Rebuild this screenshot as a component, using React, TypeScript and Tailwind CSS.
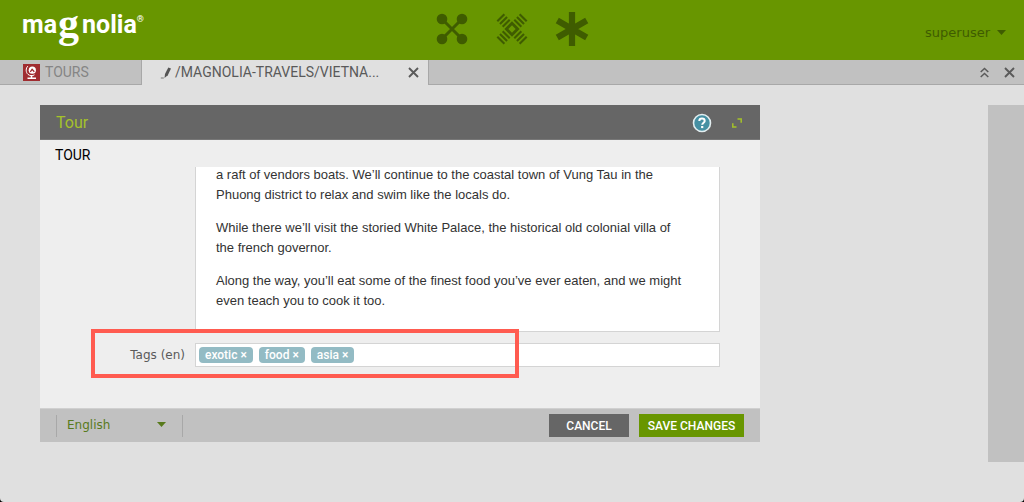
import React from "react";

function Logo() {
  return (
    <svg className="h-12 w-32 overflow-visible" viewBox="0 0 128 48" role="img" aria-label="magnolia">
      <text x="4" y="33" fill="#fff" fontFamily="Roboto, sans-serif" fontSize="25" fontWeight="700">
        ma
        <tspan dx="1" dy="4" fontFamily="'Liberation Serif', serif" fontSize="42" fontWeight="700">
          g
        </tspan>
        <tspan dx="3" dy="-4">nolia</tspan>
        <tspan dy="-11" fontSize="9" fontWeight="500">
          ®
        </tspan>
      </text>
    </svg>
  );
}

function AppsIcon() {
  return (
    <svg className="h-10 w-10" viewBox="0 0 40 40" fill="#3f5c00" aria-hidden="true">
      <path d="M10 10 30 30M30 10 10 30" stroke="#3f5c00" strokeWidth="3" />
      <circle cx="10" cy="10" r="5.3" />
      <circle cx="30" cy="10" r="5.3" />
      <circle cx="10" cy="30" r="5.3" />
      <circle cx="30" cy="30" r="5.3" />
    </svg>
  );
}

function PulseIcon() {
  return (
    <svg className="h-10 w-10" viewBox="0 0 40 40" fill="none" stroke="#3f5c00" aria-hidden="true">
      <g transform="rotate(45 20 20)">
        <rect x="16" y="16" width="8" height="8" strokeWidth="2.8" />
        <path
          d="M15 11.800h10M15 8h10M15 4.200h10M15 28.200h10M15 32h10M15 35.800h10M11.800 15v10M8 15v10M4.200 15v10M28.200 15v10M32 15v10M35.800 15v10"
          strokeWidth="2.100"
        />
      </g>
    </svg>
  );
}

function FavoritesIcon() {
  return (
    <svg className="h-10 w-10" viewBox="0 0 40 40" stroke="#3f5c00" strokeWidth="6.200" aria-hidden="true">
      <path d="M20 3v34M5.300 11.500l29.400 17M34.700 11.500l-29.400 17" />
    </svg>
  );
}

function GlobeIcon() {
  return (
    <svg className="h-[17px] w-[17px]" viewBox="0 0 17 17" fill="none" aria-hidden="true">
      <rect width="17" height="17" fill="#a02c30" />
      <circle cx="9.300" cy="6.200" r="3.600" fill="#fff" />
      <path d="M7.300 7.800 9.100 5.300 11.300 7.800" stroke="#a02c30" strokeWidth="1.300" />
      <path d="M5 2C2.600 4 2.600 8.400 5 10.400c1.800 1.500 4.600 1.700 6.500.4" stroke="#fff" strokeWidth="1" />
      <path d="M8.500 11v3.200M4.500 14.200h8.500" stroke="#fff" strokeWidth="1.600" />
    </svg>
  );
}

function PencilIcon() {
  return (
    <svg className="h-3 w-3" viewBox="0 0 12 12" fill="#555" aria-hidden="true">
      <path d="M8.300.5 11 1.500 7.800 8.300 4.500 11 5 7Z" />
      <path d="M.8 11h3" stroke="#777" strokeWidth="1" />
    </svg>
  );
}

function CloseIcon() {
  return (
    <svg className="h-[11px] w-[11px]" viewBox="0 0 11 11" stroke="#5a5a5a" strokeWidth="1.900" aria-hidden="true">
      <path d="M1 1l9 9M10 1l-9 9" />
    </svg>
  );
}

function Caret() {
  return (
    <svg className="pointer-events-none h-[5px] w-[9px]" viewBox="0 0 9 5" fill="currentColor" aria-hidden="true">
      <path d="M0 0h9L4.500 5Z" />
    </svg>
  );
}

const tags = ["exotic", "food", "asia"];

const paragraphs = [
  "a raft of vendors boats. We’ll continue to the coastal town of Vung Tau in the Phuong district to relax and swim like the locals do.",
  "While there we’ll visit the storied White Palace, the historical old colonial villa of the french governor.",
  "Along the way, you’ll eat some of the finest food you’ve ever eaten, and we might even teach you to cook it too.",
];

export default function App() {
  return (
    <div className="min-h-screen bg-black font-[Roboto,sans-serif]">
      <div className="flex min-h-screen flex-col rounded-b bg-[#e0e0e0]">
        <header className="grid h-15 grid-cols-[1fr_auto_1fr] items-center bg-[#689600] px-[18px] pb-[3px]">
          <a href="#home" className="self-start">
            <Logo />
          </a>
          <nav className="flex gap-5" aria-label="Main">
            <button aria-label="Apps">
              <AppsIcon />
            </button>
            <button aria-label="Pulse">
              <PulseIcon />
            </button>
            <button aria-label="Favorites">
              <FavoritesIcon />
            </button>
          </nav>
          <button className="mt-2 flex items-center gap-[7px] justify-self-end font-['DejaVu_Sans',sans-serif] text-[13px] leading-5 text-[#3f5c00]">
            superuser
            <Caret />
          </button>
        </header>

        <div className="flex h-[25px] border-b border-[#a8a8a8] bg-[#c1c1c1] text-[14px] text-[#5a5a5a]">
          <button className="flex w-[142px] items-center gap-[5px] border-r border-[#a8a8a8] pl-[23px] text-[#858585]">
            <GlobeIcon />
            TOURS
          </button>
          <div className="-mb-px flex w-[287px] items-center border-r border-[#a8a8a8] bg-[#e0e0e0] pr-[9px] pl-[18px]">
            <button className="flex items-center gap-[3px]">
              <PencilIcon />
              /MAGNOLIA-TRAVELS/VIETNA...
            </button>
            <button className="ml-auto" aria-label="Close tab">
              <CloseIcon />
            </button>
          </div>
          <div className="ml-auto flex items-center gap-[15px] pr-[9px]">
            <button aria-label="Collapse">
              <svg className="h-[11px] w-[9px]" viewBox="0 0 9 11" fill="none" stroke="#5a5a5a" strokeWidth="1.500" aria-hidden="true">
                <path d="M.7 5 4.500 1.500 8.300 5M.7 10 4.500 6.500 8.300 10" />
              </svg>
            </button>
            <button aria-label="Close all">
              <CloseIcon />
            </button>
          </div>
        </div>

        <main className="flex justify-between pt-5 pl-10">
          <section className="mb-5 max-w-[720px] flex-1 bg-[#eee]">
            <div className="flex h-[35px] items-center border-b border-[#777] bg-[#666] pt-0.5 pr-[18px] pl-4">
              <h1 className="text-[16px] text-[#a5c22a]">Tour</h1>
              <button className="ml-auto" aria-label="Help">
                <svg className="h-5 w-5" viewBox="0 0 20 20" aria-hidden="true">
                  <circle cx="10" cy="10" r="8.500" fill="#4690a3" stroke="#e3eef0" strokeWidth="1.600" />
                  <path d="M7.300 8c0-3.300 5.400-3.300 5.400 0 0 1.700-2.500 1.800-2.500 3.800" fill="none" stroke="#fff" strokeWidth="2" />
                  <rect x="9.100" y="13" width="2.200" height="2.100" fill="#fff" />
                </svg>
              </button>
              <button className="ml-5" aria-label="Maximize">
                <svg className="h-2.5 w-2.5" viewBox="0 0 10 10" fill="none" stroke="#a5c22a" strokeWidth="1.500" aria-hidden="true">
                  <path d="M5.500 1h3.700v3.700M.8 5.300V9h3.700" />
                </svg>
              </button>
            </div>

            <h2 className="h-[27px] pt-[5px] pl-[15px] text-[14px] leading-5 text-black">TOUR</h2>

            <div className="pr-10 pb-[41px]">
              <div className="ml-[155px] overflow-hidden border border-t-0 border-[#d4d4d4] bg-white">
                <div
                  role="textbox"
                  aria-label="Body"
                  aria-multiline="true"
                  className="-mt-0.5 space-y-[13px] pr-7 pb-5 pl-5 font-['Liberation_Sans',Arial,sans-serif] text-[13px] leading-5 text-[#333]"
                >
                  {paragraphs.map((text) => (
                    <p key={text}>{text}</p>
                  ))}
                </div>
              </div>

              <div className="relative mt-[11px] flex items-center">
                <label
                  htmlFor="tags"
                  className="w-[155px] shrink-0 pr-2.5 text-right font-['DejaVu_Sans',sans-serif] text-[12px] text-[#5a5a5a]"
                >
                  Tags (en)
                </label>
                <div className="flex h-6 min-w-0 flex-1 items-center gap-1.5 border border-[#d4d4d4] bg-white px-[3px]">
                  {tags.map((tag) => (
                    <button key={tag} className="h-4 shrink-0 rounded bg-[#93bbc4] px-1.5 text-[12px] leading-4 font-medium text-white">
                      {tag} ×
                    </button>
                  ))}
                  <input id="tags" className="min-w-0 flex-1 bg-transparent text-[12px] outline-none" />
                </div>
                <div className="pointer-events-none absolute -top-[14px] left-[51px] h-[49px] w-[428px] border-4 border-[#ff5b50]" />
              </div>
            </div>

            <div className="flex h-[34px] items-center border-t border-[#d0d0d0] bg-[#c1c1c1] px-4">
              <div className="relative flex h-[22px] w-[127px] items-center border-x border-[#a8a8a8]">
                <select
                  aria-label="Language"
                  className="w-full appearance-none bg-transparent pb-0.5 pl-2.5 font-['DejaVu_Sans',sans-serif] text-[12px] text-[#587a1c] outline-none"
                >
                  <option>English</option>
                </select>
                <span className="pointer-events-none absolute right-4 pb-0.5 text-[#587a1c]">
                  <Caret />
                </span>
              </div>
              <button className="ml-auto h-[23px] w-20 bg-[#666] text-[12px] font-medium text-white">CANCEL</button>
              <button className="ml-2.5 h-[23px] w-[105px] bg-[#689600] text-[12px] font-medium text-white">SAVE CHANGES</button>
            </div>
          </section>
          <aside className="w-9 bg-[#c1c1c1]" />
        </main>
      </div>
    </div>
  );
}
